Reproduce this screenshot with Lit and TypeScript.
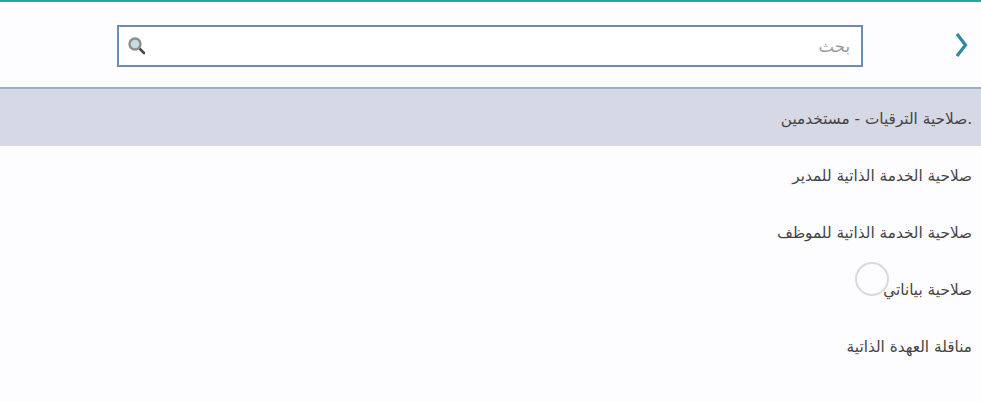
import { LitElement, html, css } from 'lit';
import { customElement } from 'lit/decorators.js';

const ITEMS = [
    '.صلاحية الترقيات - مستخدمين',
    'صلاحية الخدمة الذاتية للمدير',
    'صلاحية الخدمة الذاتية للموظف',
    'صلاحية بياناتي',
    'مناقلة العهدة الذاتية',
];

@customElement('app-root')
export class AppRoot extends LitElement {
    static styles = css`
        :host {
            display: block;
            height: 402px;
            overflow: hidden;
            background: #fdfdff;
            font-family: "DejaVu Sans", sans-serif;
            color: #444;
        }
        .top {
            height: 2px;
            background: #2fa3a8;
        }
        .header {
            box-sizing: border-box;
            height: 87px;
            display: flex;
            align-items: flex-start;
            padding: 23px 0 0 117px;
            border-bottom: 2px solid #8fb0d2;
        }
        .search {
            box-sizing: border-box;
            width: 746px;
            height: 42px;
            display: flex;
            align-items: center;
            justify-content: space-between;
            padding: 0 11px 0 8px;
            border: 2px solid #6c8db0;
            background: #fff;
        }
        .search span {
            direction: rtl;
            font-size: 16.5px;
            color: #999;
        }
        .chevron {
            margin-left: 91px;
            margin-top: 7px;
        }
        .row {
            height: 57px;
            display: flex;
            align-items: center;
            justify-content: flex-end;
            padding: 2px 9px 0 0;
            box-sizing: border-box;
            font-size: 15.3px;
        }
        .row span {
            direction: rtl;
            unicode-bidi: plaintext;
        }
        .row.selected {
            background: #d6d8e6;
        }
        .list {
            position: relative;
        }
        .cursor {
            position: absolute;
            left: 855px;
            top: 173px;
            width: 30px;
            height: 30px;
            border: 2px solid #d8d8e2;
            border-radius: 50%;
        }
    `;

    render() {
        return html`
            <div class="top"></div>
            <div class="header">
                <div class="search">
                    <svg width="20" height="20" viewBox="0 0 20 20">
                        <line x1="11" y1="11" x2="17" y2="17" stroke="#4a4a4a" stroke-width="2.6" stroke-linecap="round"/>
                        <circle cx="8" cy="8" r="5.5" fill="#c4dde4" stroke="#8d8d8d" stroke-width="2.4"/>
                    </svg>
                    <span>بحث</span>
                </div>
                <svg class="chevron" width="16" height="26" viewBox="0 0 16 26" fill="none">
                    <path d="M3 2 L11.5 13 L3 24" stroke="#2f8a9c" stroke-width="3.2"/>
                </svg>
            </div>
            <div class="list">
                ${ITEMS.map((item, i) => html`
                    <div class="row ${i === 0 ? 'selected' : ''}"><span>${item}</span></div>
                `)}
                <div class="cursor"></div>
            </div>
        `;
    }
}
